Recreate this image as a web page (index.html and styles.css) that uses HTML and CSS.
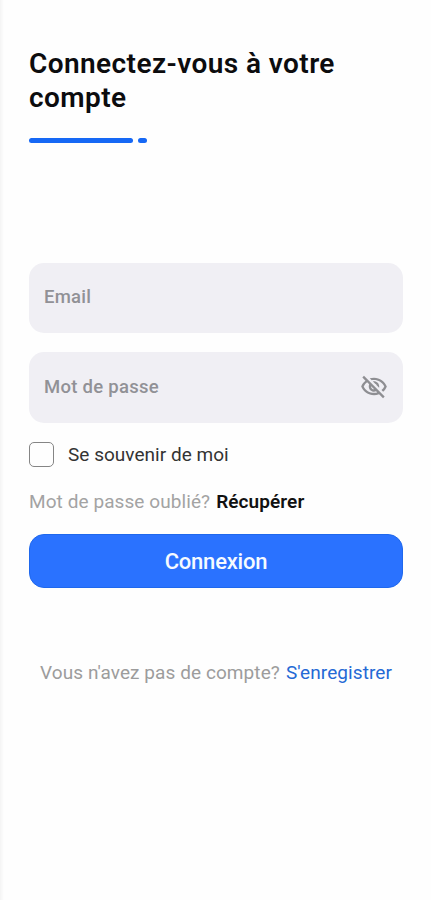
FILE: index.html
```html
<!DOCTYPE html>
<html lang="fr">
<head>
<meta charset="utf-8">
<meta name="viewport" content="width=device-width, initial-scale=1">
<title>Connexion</title>
<link rel="stylesheet" href="styles.css">
</head>
<body>
<main class="screen">
  <h1 class="title">Connectez-vous à votre<br>compte</h1>
  <div class="accent"><span class="accent-long"></span><span class="accent-dot"></span></div>
  <form class="form">
    <div class="field field-email"><span class="label">Email</span></div>
    <div class="field field-password">
      <span class="label">Mot de passe</span>
      <svg class="eye" viewBox="0 0 24 24" aria-hidden="true"><path d="M12 6c3.79 0 7.17 2.13 8.82 5.5-.59 1.22-1.42 2.27-2.41 3.12l1.41 1.41c1.39-1.23 2.49-2.77 3.18-4.53C21.27 7.11 17 4 12 4c-1.27 0-2.49.2-3.64.57l1.65 1.65C10.66 6.09 11.32 6 12 6zm-1.07 1.14L13 9.21c.57.25 1.03.71 1.28 1.28l2.07 2.07c.08-.34.14-.7.14-1.07C16.5 9.01 14.48 7 12 7c-.37 0-.72.05-1.07.14zM2.01 3.87l2.68 2.68C3.06 7.83 1.77 9.53 1 11.5 2.73 15.89 7 19 12 19c1.52 0 2.98-.29 4.32-.82l3.42 3.42 1.41-1.41L3.42 2.45 2.01 3.87zm7.5 7.5l2.61 2.61c-.04.01-.08.02-.12.02-1.38 0-2.5-1.12-2.5-2.5 0-.05.01-.08.01-.13zm-3.4-3.4l1.75 1.75c-.23.55-.36 1.15-.36 1.78 0 2.48 2.02 4.5 4.5 4.5.63 0 1.23-.13 1.77-.36l.98.98c-.88.24-1.8.38-2.75.38-3.79 0-7.17-2.13-8.82-5.5.7-1.43 1.72-2.61 2.93-3.53z"/></svg>
    </div>
    <label class="remember"><span class="box"></span><span class="remember-text">Se souvenir de moi</span></label>
    <p class="forgot"><span class="forgot-text">Mot de passe oublié?</span><a class="recover">Récupérer</a></p>
    <button class="submit" type="button">Connexion</button>
  </form>
  <p class="signup"><span class="signup-text">Vous n'avez pas de compte?</span><a class="register">S'enregistrer</a></p>
</main>
</body>
</html>
```
FILE: styles.css
```css
* { box-sizing: border-box; }
body {
  margin: 0;
  background: #fefefe;
  font-family: Roboto, "Liberation Sans", sans-serif;
  font-size: 19px;
}
.screen {
  height: 900px;
  padding: 47px 28px 0 29px;
  background: linear-gradient(to right, #f4f4f4 0, #fefefe 4px);
}
.title {
  margin: 0;
  font-size: 28px;
  line-height: 34px;
  font-weight: 600;
  letter-spacing: 0.42px;
  color: #0c0c0e;
}
.accent { display: flex; gap: 5px; margin-top: 23px; }
.accent span { height: 5px; border-radius: 3px; background: #1668f5; }
.accent-long { width: 104px; }
.accent-dot { width: 9px; }
.form { margin-top: 120px; }
.field {
  display: flex;
  align-items: center;
  justify-content: space-between;
  height: 70px;
  padding: 0 15px;
  border-radius: 15px;
  background: #f0eff4;
}
.field-email { padding-bottom: 3px; }
.field-password { height: 71px; margin-top: 19px; padding-bottom: 1px; }
.label { font-size: 18.5px; font-weight: 500; color: #919196; letter-spacing: 0.27px; }
.eye { width: 28px; height: 28px; fill: #8e8e92; }
.remember { display: flex; align-items: center; gap: 14px; height: 25px; margin-top: 19px; }
.box { width: 25px; height: 25px; border: 1.5px solid #858585; border-radius: 5px; }
.remember-text { color: #333; letter-spacing: 0.03px; }
.forgot, .signup { display: flex; margin: 0; line-height: 24px; white-space: nowrap; letter-spacing: 0.08px; }
.forgot { gap: 6px; margin-top: 23px; color: #a3a3a3; }
.recover { font-weight: 600; color: #111; }
.submit {
  display: block;
  width: 100%;
  height: 54px;
  margin-top: 20px;
  padding: 0;
  border: 1px solid #1f68ed;
  border-radius: 15px;
  background: #2a72ff;
  color: #f5faff;
  font: 500 22px Roboto, "Liberation Sans", sans-serif;
  letter-spacing: -0.2px;
}
.signup { gap: 6px; margin: 73px 0 0 11px; color: #9c9c9c; }
.register { color: #2469d5; }
```
